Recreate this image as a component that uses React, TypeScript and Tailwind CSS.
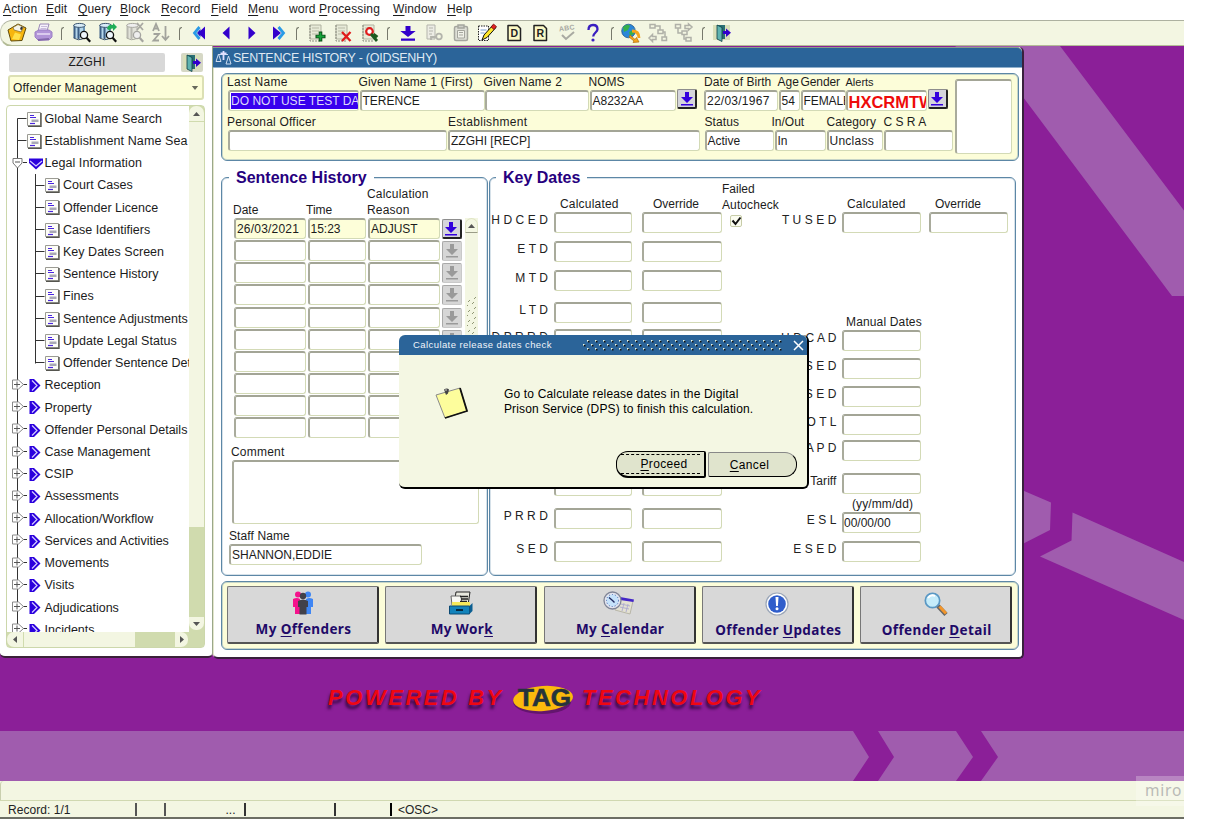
import React from "react";

type Kids = { children?: React.ReactNode };

/* ---------- shared pieces ---------- */

function Svg({ children, w = 22, h = 22 }: Kids & { w?: number; h?: number }) {
  return (
    <svg width={w} height={h} viewBox={`0 0 ${w} ${h}`} className="block shrink-0">
      {children}
    </svg>
  );
}

/* Renders "_" before a letter as an underlined mnemonic. */
function Mnemonic({ text }: { text: string }) {
  const i = text.indexOf("_");
  if (i < 0) return <>{text}</>;
  return (
    <>
      {text.slice(0, i)}
      <span className="underline underline-offset-2">{text[i + 1]}</span>
      {text.slice(i + 2)}
    </>
  );
}

function Field({ className, children }: Kids & { className: string }) {
  return (
    <div
      className={
        "shrink-0 overflow-hidden rounded-[3px] border-2 border-r border-b border-t-[#a3a596] border-l-[#a9ab9c] border-r-[#d3dab6] border-b-[#d3dab6] whitespace-nowrap flex items-center " +
        className
      }
    >
      {children}
    </div>
  );
}

function DownButton({ off, className = "" }: { off?: boolean; className?: string }) {
  return (
    <div
      className={
        "flex h-5 w-5 shrink-0 items-center justify-center rounded-[2px] border " +
        (off ? "border-[#a9a9a9] border-r-[#c9c9c9] border-b-[#c9c9c9] bg-[#d6d6d6] " : "border-[#8d8d8d] border-r-[#222] border-b-[#222] border-r-2 border-b-2 bg-[#d5d5dc] ") +
        className
      }
    >
      <svg width="14" height="16" viewBox="0 0 14 16">
        <path d="M5 1h4v5h4L7 12 1 6h4zM1 13h12v1.6H1z" fill={off ? "#9a9a9a" : "#3300dd"} />
      </svg>
    </div>
  );
}

/* ---------- toolbar icons ---------- */

const barrel = (dim: boolean) => (
  <g>
    <path d="M3 3h11v13H3z" fill={dim ? "#e2e3da" : "#b4d6ea"} />
    <path d="M3.500 3v13M7.500 4v13" stroke={dim ? "#b8b8b0" : "#3c5f86"} strokeWidth="2" />
    <path d="M13 4v8" stroke={dim ? "#c4c4bc" : "#5481a8"} strokeWidth="1.500" />
    <ellipse cx="8.500" cy="3.400" rx="5.800" ry="2" fill={dim ? "#eee" : "#d8ecf8"} stroke={dim ? "#a8a8a0" : "#39536e"} />
    <path d="M2.600 16q5 3 9 1" fill="none" stroke={dim ? "#a8a8a0" : "#39536e"} />
  </g>
);
const lens = (dim: boolean) => (
  <g>
    <circle cx="13" cy="13" r="3.600" fill={dim ? "#eee" : "#eef6fc"} stroke={dim ? "#a5a5a0" : "#111"} strokeWidth="1.300" />
    <path d="M15.600 15.800l3.600 4" stroke={dim ? "#a5a5a0" : "#111"} strokeWidth="2.200" />
  </g>
);
const sheet = (
  <g>
    <path d="M4 3h11v14H4z" fill="#e7ead8" stroke="#b0b2a0" />
    <path d="M4 3v16h10" stroke="#8b8d80" fill="none" strokeDasharray="2 1" />
    <path d="M6 6h7M6 9h7M6 12h6" stroke="#b9bba8" />
  </g>
);

const icons: Record<string, React.ReactNode> = {
  save: (
    <g>
      <path d="M2 8l10-6 8 4-4 12.500L5 19z" fill="#f6b50f" stroke="#5f4a0a" />
      <path d="M7 5.500l5-3 5.500 2.500-2.500 5-7-2z" fill="#f4f4ea" stroke="#8a7430" strokeWidth=".8" />
      <path d="M6 17l3-6.500 6 2-2 5.500z" fill="#ffe04a" />
      <path d="M15 4.500l2 1-1.200 2.500-1.800-.8z" fill="#333" />
    </g>
  ),
  print: (
    <g>
      <path d="M7 2h9l-2 7H5z" fill="#f6f2fb" stroke="#9c8ab8" />
      <path d="M8 4.500h6M7.500 6.500h6" stroke="#c9bcdc" />
      <path d="M2 10l4-2h10l3 2v5l-3 3H5l-3-3z" fill="#b295d8" stroke="#9c80c4" />
      <path d="M4 12h13" stroke="#e9def6" strokeWidth="1.500" />
      <path d="M5 18l11-1" stroke="#8468ac" strokeWidth="2" />
    </g>
  ),
  find: <g>{barrel(false)}{lens(false)}</g>,
  findGo: (
    <g>
      {barrel(false)}
      <path d="M10 7q1-5 6-4V1l4 4-4 4V6.500q-3-.5-3 2z" fill="#1fae57" />
      {lens(false)}
    </g>
  ),
  findCancel: (
    <g>
      {barrel(true)}
      <path d="M13 1l6 7M19 1l-6 7" stroke="#a8a8a2" strokeWidth="1.800" />
      {lens(true)}
    </g>
  ),
  sort: (
    <g fill="none" stroke="#a2a39c" strokeWidth="1.800">
      <path d="M3 9l3-7 3 7M4 6.500h4M3.500 12H9l-5.500 6.500H9" />
      <path d="M15.500 4v14M12 14l3.500 4 3.500-4" />
    </g>
  ),
  first: <g><path d="M17 4.500v13L10 11z" fill="#3300cc" /><path d="M11.500 5L6.500 11l5 6" fill="none" stroke="#2a9ae6" strokeWidth="2.800" /><path d="M12.500 7l-3.500 4 3.500 4z" fill="#2210c8" /></g>,
  prev: <path d="M14.500 4.500v13L7.500 11z" fill="#3300cc" />,
  next: <path d="M7.500 4.500v13l7-6.500z" fill="#3300cc" />,
  last: <g><path d="M10.500 5l5 6-5 6" fill="none" stroke="#2a9ae6" strokeWidth="2.800" /><path d="M5 4.500v13l8-6.500z" fill="#3300cc" /></g>,
  add: <g>{sheet}<path d="M14.500 9.500v10M9.500 14.500h10" stroke="#0b4a17" strokeWidth="3.600" /><path d="M14.500 10.500v8M10.500 14.500h8" stroke="#17a33b" strokeWidth="1.800" /></g>,
  del: <g>{sheet}<path d="M10 10l8.500 9M18.500 10L10 19" stroke="#e01a1a" strokeWidth="2.300" /></g>,
  lock: <g>{sheet}<circle cx="10.500" cy="9.500" r="3.300" fill="#fff" stroke="#e01a1a" strokeWidth="2.200" /><path d="M12 12l6 7M14.500 12l4 3" stroke="#1c5a20" strokeWidth="2.800" /></g>,
  lov: <path d="M8.500 4h5v5h5.200L11 15 3.300 9h5.200zM4 16.500h14v2.300H4z" fill="#3300cc" />,
  docKey: <g stroke="#b3b4ac" fill="none"><path d="M4 3h8v14H4zM6 6h4M6 9h4M6 12h3" fill="#ececE4" /><circle cx="16" cy="14.500" r="2.800" strokeWidth="1.800" /><path d="M13 15H8v3" strokeWidth="1.800" /></g>,
  clip: <g fill="none" stroke="#a5a69e" strokeWidth="1.500"><rect x="4.500" y="4.500" width="13" height="14" rx="1.500" fill="#dedfd6" /><path d="M8 3h6v3H8z" fill="#cfd0c8" /><path d="M7.500 8.500h7v7.500h-7zM9 10.500h4M9 13h4" fill="#f0f1e8" strokeWidth="1" /></g>,
  edit: <g><path d="M2.500 4h10v14.500h-10z" fill="#fff" stroke="#222" strokeDasharray="1.500 1" /><path d="M4.500 8h6M4.500 11h4" stroke="#7aa0d0" /><path d="M6 18l2-5 9-10 3 2.500-9 10z" fill="#ffe62a" stroke="#111" /><path d="M15 5l2.500-3 3 2.500-2.500 3z" fill="#e02222" stroke="#701010" strokeWidth=".7" /></g>,
  spell: <g><text x="3" y="8.500" fontSize="7" fontWeight="700" fill="#a9aaa2" fontFamily="Liberation Sans" transform="rotate(-8 10 8)" letterSpacing="0.3">ABC</text><path d="M6 13l4 4 8-7" fill="none" stroke="#a9aaa2" strokeWidth="2" /></g>,
  help: <g><path d="M6.500 8q0-5 4.500-5t4.500 4.300c0 3-4.300 3.500-4.300 7.200" fill="none" stroke="#3a1fc0" strokeWidth="2.300" /><circle cx="11" cy="18" r="1.600" fill="#3a1fc0" /></g>,
  globe: <g><circle cx="8.500" cy="9" r="6.800" fill="#2a86d8" stroke="#174a80" strokeWidth=".7" /><path d="M3 5q5-4 7-1l-2 4-4 2zM9 10l4-2 1 4-4 2z" fill="#35b04a" /><path d="M12 9q7 0 7 7" fill="none" stroke="#f4a51c" strokeWidth="2.800" /><path d="M10 13l5 4.500 1.500-2 2.500 4.500-6 .5 1-1.500-5-4z" fill="#f4a51c" stroke="#b06a06" strokeWidth=".7" /></g>,
  flowA: <g fill="none" stroke="#b0b1a8" strokeWidth="1.500"><rect x="3" y="2.500" width="5" height="3.500" /><rect x="11" y="8" width="5" height="3.500" /><rect x="15" y="15" width="4.500" height="3.500" /><path d="M8 4h5v4M16 10h2v5M9 14.500H5.500v-2L2 16l3.500 3.500v-2H9z" /></g>,
  flowB: <g fill="none" stroke="#b0b1a8" strokeWidth="1.500"><rect x="2.500" y="2.500" width="5" height="3.500" /><rect x="9" y="9" width="5" height="3.500" /><rect x="13" y="15.500" width="5" height="3.500" /><path d="M5 6v5h4M11 12.500V17h2M12 3.500h3.500V2L19 5l-3.500 3V6.500H12z" /></g>,
  door: <g><path d="M2 3h17v15H2z" fill="#d9dfb9" /><path d="M6 3h8v14H6z" fill="#2a6f74" /><path d="M6 3l5 2.500v14L6 17z" fill="#5fb3b0" stroke="#0b3c44" strokeWidth=".8" /><path d="M12 10.500h4" stroke="#3300cc" strokeWidth="3" /><path d="M15 6.500v8.500l5-4.300z" fill="#3300cc" /></g>,
};

const pageIcon = (l: string) => (
  <svg width="22" height="22" viewBox="0 0 22 22" className="block">
    <path d="M5 3.500h9.500l3 3V18.500H5z" fill="#fbf8c4" stroke="#222" strokeWidth="1.500" strokeLinejoin="round" />
    <text x="11.200" y="15" fontSize="10.500" fontWeight="700" textAnchor="middle" fontFamily="Liberation Sans" fill="#222">{l}</text>
  </svg>
);

const tools = ["save", "print", "|", "find", "findGo", "findCancel", "sort", "|", "first", "prev", "next", "last", "|", "add", "del", "lock", "|", "lov", "docKey", "clip", "edit", "D", "R", "spell", "help", "|", "globe", "flowA", "flowB", "|", "door"];

function Toolbar() {
  return (
    <div className="flex h-[27px] items-center rounded-l-xl border-t border-b-2 border-l border-t-[#adb1a0] border-b-[#b3bb96] border-l-[#c8ccb8] bg-[#f3f6e2] pl-[3px]">
      {tools.map((t, i) =>
        t === "|" ? (
          <div key={i} className="flex w-[11.700px] shrink-0 justify-center">
            <div className="mt-[1px] h-[13px] w-[3px] rounded-tl border-t border-l border-[#77796c]" />
          </div>
        ) : (
          <div key={i} className="flex w-[26.460px] shrink-0 items-center justify-center">
            {t === "D" || t === "R" ? pageIcon(t) : <Svg>{icons[t]}</Svg>}
          </div>
        ),
      )}
    </div>
  );
}

function MenuBar() {
  const items: [string, string][] = [
    ["_Action", "w-[43px]"],
    ["_Edit", "w-[32px]"],
    ["_Query", "w-[42px]"],
    ["_Block", "w-[41px]"],
    ["_Record", "w-[50px]"],
    ["_Field", "w-[37px]"],
    ["_Menu", "w-[41px]"],
    ["word _Processing", "w-[104px]"],
    ["_Window", "w-[54px]"],
    ["_Help", "w-[40px]"],
  ];
  return (
    <div className="flex h-5 pl-[3px] text-[12px] leading-[18px] tracking-[0.15px] whitespace-nowrap">
      {items.map(([t, w]) => (
        <div key={t} className={"shrink-0 " + w}>
          <Mnemonic text={t} />
        </div>
      ))}
    </div>
  );
}

/* ---------- navigation window ---------- */

function DocIcon() {
  return (
    <Svg w={15} h={15}>
      <path d="M.5.5h13v13H.5z" fill="#fdfdf8" stroke="#9b9b94" />
      <path d="M14 1v13.500H1" fill="none" stroke="#55554f" strokeWidth="1.400" />
      <path d="M3 3.500h4M3 5.500h6" stroke="#4a26e0" strokeWidth="1.200" />
      <path d="M4.500 7.500h7v2.500h-7z" fill="#a9a9b6" />
      <path d="M3 11.500h5" stroke="#4a26e0" strokeWidth="1.200" />
    </Svg>
  );
}

function NavWindow() {
  const children = ["Court Cases", "Offender Licence", "Case Identifiers", "Key Dates Screen", "Sentence History", "Fines", "Sentence Adjustments", "Update Legal Status", "Offender Sentence Det"];
  const folders = ["Reception", "Property", "Offender Personal Details", "Case Management", "CSIP", "Assessments", "Allocation/Workflow", "Services and Activities", "Movements", "Visits", "Adjudications", "Incidents"];
  return (
    <div className="absolute top-0 left-0 flex h-[612px] w-[213px] flex-col rounded-b-[5px] border-r border-b-2 border-r-[#9aa88a] border-b-[#3a2038] bg-white pt-[7px] text-[12.500px]">
      <div className="flex pl-[9px]">
        <div className="h-[19px] w-[156px] rounded-[2px] bg-[#d8d8d8] text-center text-[12px] leading-[19px] tracking-[0.200px]">ZZGHI</div>
        <div className="ml-[16px] flex h-[19px] w-[22px] items-center justify-center rounded-[2px] bg-[#d6d8c6]">
          <Svg>{icons.door}</Svg>
        </div>
      </div>
      <div className="mt-[3px] ml-[8px] flex h-[25px] w-[196px] items-center justify-between rounded-[3px] border-2 border-[#dce0b4] bg-[#fdfed9] pr-[3px] pl-[3px]">
        <span className="text-[12px] tracking-[0.200px]">Offender Management</span>
        <svg width="8" height="4" viewBox="0 0 9 5"><path d="M.5 0h8l-4 5z" fill="#686a5c" /></svg>
      </div>
      <div className="mt-[5px] ml-[6px] flex h-[543px] w-[199px] flex-col rounded-[4px] border border-[#ccd7ab]">
        <div className="flex h-[526px]">
          <div className="relative h-full w-[182px] overflow-hidden pt-[2px]">
            <svg className="absolute top-0 left-0" width="60" height="526" viewBox="0 0 60 526">
              <path d="M10.500 12.500V526M10.500 12.500h9M10.500 34.500h9M16 56.500h4M28.500 68v189.500" fill="none" stroke="#333" />
              {children.map((c, i) => (
                <path key={c} d={`M28.500 ${Math.round(79.5 + i * 22.2) - 0.5}h9`} stroke="#333" />
              ))}
              <path d="M6 52.500h9v4.500l-4.500 5-4.500-5z" fill="#fff" stroke="#777" />
              <path d="M8 56h5" stroke="#555" />
              {folders.map((c, i) => {
                const y = Math.round(279 + i * 22.2) - 0.5;
                return (
                  <g key={c}>
                    <path d={`M16 ${y}h4`} stroke="#333" />
                    <path d={`M5.500 ${y - 4.5}h6l5 4.500-5 4.500h-6z`} fill="#fff" stroke="#888" />
                    <path d={`M7 ${y}h6M10 ${y - 3}v6`} stroke="#555" />
                  </g>
                );
              })}
            </svg>
            {["Global Name Search", "Establishment Name Sea"].map((t) => (
              <div key={t} className="flex h-[22.220px] items-center pl-[20px]">
                <DocIcon />
                <span className="pl-[2.500px] tracking-[0.090px] whitespace-nowrap">{t}</span>
              </div>
            ))}
            <div className="flex h-[22.220px] items-center pl-[22px]">
              <Svg w={14} h={12}>
                <path d="M0 .5h14v4.500L7 11.500 0 5z" fill="#2a00dd" />
                <path d="M1 3l6 5 6-5" fill="none" stroke="#cfc6ff" strokeWidth="1.300" />
              </Svg>
              <span className="pl-[1.500px] tracking-[0.050px]">Legal Information</span>
            </div>
            {children.map((t) => (
              <div key={t} className="flex h-[22.220px] items-center pl-[38px]">
                <DocIcon />
                <span className="pl-[3px] tracking-[0.020px] whitespace-nowrap">{t}</span>
              </div>
            ))}
            {folders.map((t) => (
              <div key={t} className="flex h-[22.220px] items-center pl-[22px]">
                <Svg w={12} h={13}>
                  <path d="M.5 0h4.500l6.500 6.500L5 13H.5z" fill="#2a00dd" />
                  <path d="M3 1.500l5 5-5 5" fill="none" stroke="#d6ceff" strokeWidth="1.200" />
                </Svg>
                <span className="pl-[3.500px] whitespace-nowrap">{t}</span>
              </div>
            ))}
          </div>
          <div className="flex w-[15px] flex-col bg-[#d0dbae]">
            <div className="flex h-4 items-center justify-center rounded-t-[7px] border-b border-[#d0dbae] bg-[#f3f6e2]">
              <svg width="7" height="4" viewBox="0 0 7 4"><path d="M0 4h7L3.500 0z" fill="#555" /></svg>
            </div>
            <div className="h-[405px] bg-[#f3f6e2]" />
            <div className="mt-[90px] flex h-[13px] items-center justify-center rounded-b-[7px] bg-[#f3f6e2]">
              <svg width="7" height="4" viewBox="0 0 7 4"><path d="M0 0h7L3.500 4z" fill="#555" /></svg>
            </div>
          </div>
        </div>
        <div className="flex h-[15px] bg-[#d0dbae]">
          <div className="flex w-4 items-center justify-center rounded-l-[7px] bg-[#f3f6e2]">
            <svg width="4" height="7" viewBox="0 0 4 7"><path d="M4 0v7L0 3.500z" fill="#555" /></svg>
          </div>
          <div className="ml-px w-[111px] bg-[#f3f6e2]" />
          <div className="ml-[40px] flex w-[13px] items-center justify-center rounded-r-[7px] bg-[#f3f6e2]">
            <svg width="4" height="7" viewBox="0 0 4 7"><path d="M0 0v7l4-3.500z" fill="#555" /></svg>
          </div>
        </div>
      </div>
    </div>
  );
}

/* ---------- offender header ---------- */

function Cell({ label, cell, field, value, labelClass = "" }: { label: string; cell: string; field: string; value?: React.ReactNode; labelClass?: string }) {
  return (
    <div className={"shrink-0 " + cell}>
      <div className={"h-[15px] leading-[15px] whitespace-nowrap " + labelClass}>{label}</div>
      <Field className={"h-[21px] bg-white pl-[1px] " + field}>{value}</Field>
    </div>
  );
}

function OffenderHeader() {
  return (
    <div className="mt-[6px] ml-[7px] flex h-[88px] w-[798px] justify-between rounded-[6px] border border-[#5c87a6] bg-[#fcfdd9] pt-px pr-[6px] pl-[6px] shadow-[inset_0_0_0_1px_#5c87a655]">
      <div>
        <div className="flex">
          <Cell label="Last Name" cell="w-[131.500px]" field="w-[131px]" labelClass="-ml-px tracking-[0.300px]" value={<div className="h-[16px] w-full bg-[#3800ee] leading-[17px] tracking-[0.020px] text-[#ddd8fa]">DO NOT USE TEST DA</div>} />
          <Cell label="Given Name 1 (First)" cell="w-[125px]" field="w-[125px]" labelClass="-ml-px tracking-[0.150px]" value="TERENCE" />
          <Cell label="Given Name 2" cell="w-[105px]" field="w-[104.500px]" labelClass="-ml-px tracking-[0.150px]" value="" />
          <Cell label="NOMS" cell="w-[87.500px]" field="w-[86px]" labelClass="-ml-px" value="A8232AA" />
          <DownButton className="mt-[14px] mr-[7px]" />
          <Cell label="Date of Birth" cell="w-[74.500px]" field="w-[73.500px]" labelClass="tracking-[0.050px]" value={<span className="tracking-[0.250px]">22/03/1967</span>} />
          <Cell label="Age" cell="w-[22px]" field="w-[21.500px]" labelClass="-ml-px" value="54" />
          <Cell label="Gender" cell="w-[45px]" field="w-[45px]" labelClass="tracking-[-0.100px]" value={<span className="tracking-[-0.100px]">FEMALE</span>} />
          <Cell label="Alerts" cell="w-[82px]" field="w-[81px]" labelClass="text-[11px]" value={<span className="pt-[2px] text-[16.500px] leading-none font-bold text-[#ee0a0a]">HXCRMTW</span>} />
          <DownButton className="mt-[14px]" />
        </div>
        <div className="mt-[4px] flex">
          <Cell label="Personal Officer" cell="w-[220px]" field="w-[218.500px]" labelClass="-ml-px tracking-[0.200px]" />
          <Cell label="Establishment" cell="w-[256.500px]" field="w-[251.500px]" labelClass="tracking-[0.300px]" value="ZZGHI [RECP]" />
          <Cell label="Status" cell="w-[70px]" field="w-[69px]" labelClass="tracking-[0.100px]" value="Active" />
          <Cell label="In/Out" cell="w-[52px]" field="w-[51px]" labelClass="-ml-[3px]" value="In" />
          <Cell label="Category" cell="w-[57px]" field="w-[56px]" labelClass="tracking-[0.100px]" value={<span className="tracking-[0.250px]">Unclass</span>} />
          <Cell label="C S R A" cell="w-[70px]" field="w-[69px]" />
        </div>
      </div>
      <Field className="mt-[4px] h-[75px] w-[57px] bg-white" />
    </div>
  );
}

/* ---------- sentence history ---------- */

function PanelTitle({ children }: Kids) {
  return <div className="-mt-[10px] w-fit bg-white pr-[7px] pl-[7px] text-[16px] leading-[20px] font-bold text-[#26007e]">{children}</div>;
}

function SentenceHistory() {
  const rows = [["26/03/2021", "15:23", "ADJUST"], [], [], [], [], [], [], [], [], []];
  return (
    <div className="h-[399px] w-[267px] rounded-[6px] border border-[#5c87a6] pl-[7px] shadow-[inset_0_0_0_1px_#5c87a640]">
      <PanelTitle>Sentence History</PanelTitle>
      <div className="-mt-[2px] flex items-end pl-[4px] leading-[16px]">
        <div className="w-[73px]">Date</div>
        <div className="w-[61px]">Time</div>
        <div className="tracking-[0.200px]">Calculation<br />Reason</div>
      </div>
      <div className="flex pl-[5px]">
        <div>
          {rows.map((r, i) => {
            const bg = i === 0 ? " bg-[#fdfed9]" : " bg-white";
            return (
              <div key={i} className="flex h-[22.150px] gap-[2px]">
                <Field className={"h-[21px] w-[71.500px] pl-[1px] tracking-[0.200px]" + bg}>{r[0]}</Field>
                <Field className={"h-[21px] w-[58.500px] pl-[1px]" + bg}>{r[1]}</Field>
                <Field className={"h-[21px] w-[71.500px] pl-[1px]" + bg}>{r[2]}</Field>
                <DownButton off={i > 0} className="mt-px" />
              </div>
            );
          })}
        </div>
        <div className="ml-[3px] h-[220px] w-[13px] bg-[#f3f6e2]">
          <div className="flex h-[15px] items-center justify-center rounded-t-[7px] border border-[#dfe4c4] border-b-[#9a9c88]">
            <svg width="7" height="4" viewBox="0 0 7 4"><path d="M0 4h7L3.500 0z" fill="#555" /></svg>
          </div>
          <svg width="13" height="60" viewBox="0 0 13 60" className="mt-[62px]">
            {[4, 14, 24, 34, 44, 54].map((y) => (
              <path key={y} d={`M3 ${y + 3}l2-2M9 ${y}l2-2M2 ${y + 7}l1-1M7 ${y + 5}l2-2`} stroke="#8f9674" />
            ))}
          </svg>
        </div>
      </div>
      <div className="mt-[5px] ml-[2px] leading-[16px] tracking-[0.200px]">Comment</div>
      <Field className="ml-[3px] h-[64px] w-[247px] bg-white" />
      <div className="mt-[4px] leading-[16px] tracking-[0.100px]">Staff Name</div>
      <Field className="h-[21px] w-[193px] bg-white pl-[1px]">SHANNON,EDDIE</Field>
    </div>
  );
}

/* ---------- key dates ---------- */

const leftDates: [string, string][] = [
  ["H D C E D", "mt-0"],
  ["E T D", "mt-[8px]"],
  ["M T D", "mt-[8px]"],
  ["L T D", "mt-[10.500px]"],
  ["D P R R D", "mt-[6.500px]"],
  ["N P D", "mt-[125px]"],
  ["P R R D", "mt-[11.500px]"],
  ["S E D", "mt-[12.500px]"],
];
const rightDates: [string, string][] = [
  ["H D C A D", "mt-0"],
  ["E R S E D", "mt-[6.500px]"],
  ["T R S E D", "mt-[7px]"],
  ["R O T L", "mt-[7.500px]"],
  ["A P D", "mt-[5px]"],
  ["Tariff", "mt-[11.500px]"],
];

function KeyRow({ label, value }: { label: string; value?: string }) {
  return (
    <>
      <div className="flex min-w-0 flex-1 justify-end pt-px pr-[5.500px] leading-[15px] whitespace-pre tracking-[0.080px] text-[#222]">
        <span className="shrink-0">{label}</span>
      </div>
      <Field className="h-[21px] w-[78.500px] bg-white">{value}</Field>
    </>
  );
}

function KeyDates() {
  return (
    <div className="h-[399px] w-[527px] rounded-[6px] border border-[#5c87a6] pl-[6px] shadow-[inset_0_0_0_1px_#5c87a640]">
      <PanelTitle>Key Dates</PanelTitle>
      <div className="flex">
        <div className="w-[226px]">
          <div className="flex h-[24px] items-end pl-[64px] leading-[15px]">
            <div className="w-[93px] tracking-[0.200px]">Calculated</div>
            <div>Override</div>
          </div>
          {leftDates.map(([label, mt]) => (
            <div key={label} className={"flex w-full gap-0 " + mt}>
              <div className="flex w-[136px]">
                <KeyRow label={label} />
              </div>
              <Field className="ml-[10px] h-[21px] w-[79.500px] bg-white" />
            </div>
          ))}
        </div>
        <div className="w-[60px]">
          <div className="-mt-[7px] leading-[16px]">Failed<br /><span className="tracking-[0.100px]">Autocheck</span></div>
          <div className="mt-[2px] ml-[8px] h-[12px] w-[12px] rounded-[2px] border border-[#c7cca8] bg-[#fbfcf0]">
            <svg width="11" height="10" viewBox="0 0 11 10"><path d="M1.500 4.500L4.500 8 9.500 1.500" fill="none" stroke="#111" strokeWidth="2" /></svg>
          </div>
        </div>
        <div>
          <div className="flex h-[24px] items-end pl-[65px] leading-[15px]">
            <div className="w-[88px] tracking-[0.200px]">Calculated</div>
            <div>Override</div>
          </div>
          <div className="flex">
            <div className="flex w-[138.500px]"><KeyRow label="T U S E D" /></div>
            <Field className="ml-[8px] h-[21px] w-[79px] bg-white" />
          </div>
          <div className="mt-[82px] pl-[64px] leading-[15px] tracking-[0.150px]">Manual Dates</div>
          {rightDates.map(([label, mt]) => (
            <div key={label} className={"flex w-[138.500px] " + mt}><KeyRow label={label} /></div>
          ))}
          <div className="mt-[2px] pl-[70px] leading-[16px] tracking-[0.100px]">(yy/mm/dd)</div>
          <div className="flex w-[138.500px]"><KeyRow label="E S L" value="00/00/00" /></div>
          <div className="mt-[8.500px] flex w-[138.500px]"><KeyRow label="E S E D" /></div>
        </div>
      </div>
    </div>
  );
}

/* ---------- bottom shortcuts ---------- */

const shortcutIcons: React.ReactNode[] = [
  <g key="p">
    <g fill="#f5128c"><circle cx="8" cy="3.500" r="3" /><path d="M3 8q4-2 7 0v15H5v-7H3z" /></g>
    <g fill="#3f86f4"><circle cx="18" cy="3.500" r="3" /><path d="M23 8q-4-2-7 0v15h5v-7h2z" /></g>
    <g fill="#41414a"><circle cx="13" cy="5" r="3.200" /><path d="M8 10q5-3 10 0v6h-1.500v7.500h-7V16H8z" /></g>
  </g>,
  <g key="w">
    <path d="M8 1h14l-2 13H6z" fill="#e8e8de" stroke="#222" />
    <path d="M3 5h10l1 9H4z" fill="#f8f8f4" stroke="#666" />
    <path d="M12 5.500h8M13 8h7M12 10.500h7" stroke="#222" strokeWidth="1.300" />
    <path d="M4 11h18v6H4z" fill="#f6e95a" />
    <path d="M1.500 15h20v8h-20z" fill="#1283bb" stroke="#0b4a74" />
    <path d="M21.500 15l3-3v8l-3 3z" fill="#0b5f92" />
    <path d="M8 18h7v2H8z" fill="#05283e" />
  </g>,
  <g key="c">
    <path d="M15 7l15 3-3 13-15-4z" fill="#e3e1d2" stroke="#b8b6a8" />
    <path d="M17 6l14 2.500-.6 2.500-13.400-2z" fill="#4326c8" />
    <path d="M18 13l9 2M17 16l9 2M21 12l-2 8M25 13l-2 8" stroke="#b0aed0" />
    <circle cx="9.500" cy="9.500" r="8.500" fill="#e2e4ee" stroke="#7f8496" strokeWidth="1.300" />
    <circle cx="9.500" cy="9.500" r="6" fill="#c5e2fb" stroke="#3d62ae" strokeDasharray="1 2" />
    <path d="M9.500 9.500L6 6.500M9.500 9.500l2 2" stroke="#222a60" strokeWidth="1.400" />
  </g>,
  <g key="u">
    <circle cx="13" cy="12" r="11" fill="#fff" stroke="#9ba6b8" strokeWidth="1.200" />
    <circle cx="13" cy="12" r="8.800" fill="#2f5dcb" />
    <path d="M11.500 5h3l-.6 9h-1.800z" fill="#fff" />
    <circle cx="13" cy="16.800" r="1.500" fill="#fff" />
  </g>,
  <g key="d">
    <circle cx="9.500" cy="8.500" r="7.200" fill="#c5ecfa" stroke="#5a98c4" strokeWidth="1.700" />
    <path d="M5 6q3-4 7-2" stroke="#fff" strokeWidth="2" fill="none" />
    <path d="M15 14l8 8.500" stroke="#666" strokeWidth="4.500" />
    <path d="M16.500 14.500l6.500 7" stroke="#f2962c" strokeWidth="3" />
  </g>,
];

function Shortcuts() {
  const items: [string, string][] = [
    ["My _Offenders", "pt-[4px]"],
    ["My Wor_k", "pt-[4px]"],
    ["My _Calendar", "pt-[4px]"],
    ["Offender _Updates", "pt-[5px]"],
    ["Offender _Detail", "pt-[5px]"],
  ];
  return (
    <div className="mt-[5px] ml-[7px] flex h-[69px] w-[798px] gap-[6.300px] rounded-[6px] border border-[#5c87a6] bg-[#fcfdd9] pt-[4px] pl-[5px] shadow-[inset_0_0_0_1px_#5c87a655]">
      {items.map(([label, pt], i) => (
        <div key={label} className={"flex h-[58px] w-[152px] shrink-0 flex-col items-center rounded-[2px] border border-r-2 border-b-2 border-[#777] border-r-[#333] border-b-[#555] bg-[#d8d8d8] " + pt}>
          <Svg w={i === 2 ? 32 : 26} h={25}>{shortcutIcons[i]}</Svg>
          <div className="mt-[4px] pl-[2px] font-['Noto_Sans'] text-[13.500px] leading-[18px] font-bold tracking-[0.380px] text-[#1f0a68]">
            <Mnemonic text={label} />
          </div>
        </div>
      ))}
    </div>
  );
}

function MainWindow() {
  return (
    <div className="absolute top-[1px] left-[213px] h-[612px] w-[810.500px] rounded-[5px] border-r-2 border-b-2 border-l border-l-[#e3e6cc] border-r-[#38203c] border-b-[#38203c] bg-white text-[12px]">
      <div className="-ml-px flex h-[21px] items-center rounded-tr-[5px] border-t border-b border-t-[#8a9a8c] border-b-[#8fb0cc] bg-[#2b6499] pl-[2px] text-[#dfe9f3]">
        <svg width="17" height="16" viewBox="0 0 17 16" fill="none" stroke="#cddcf0">
          <path d="M4 4.500h9M3.500 4l-2.500 7.500h5zM13.500 6L11 14h5z" />
          <path d="M5.500 3.500h6M8.500 1v9" stroke="#e2e0ff" strokeWidth="1.800" />
        </svg>
        <span className="pt-[2px] pl-[1px] text-[12.500px] leading-[15px] tracking-[-0.250px]">SENTENCE HISTORY - (OIDSENHY)</span>
      </div>
      <div className="-mt-px">
        <OffenderHeader />
      </div>
      <div className="mt-[16px] ml-[7px] flex gap-[1px]">
        <SentenceHistory />
        <KeyDates />
      </div>
      <Shortcuts />
    </div>
  );
}

/* ---------- dialog ---------- */

function Dialog() {
  return (
    <div className="absolute top-[289px] left-[399px] h-[154px] w-[410px] rounded-[6px] border-r-2 border-b-2 border-black bg-[#f4f7e3] text-[12px] text-black">
      <div className="flex h-[20px] items-center rounded-t-[6px] bg-[#2b6499] pl-[14px] text-[#f0f4fa]">
        <span className="w-[169px] text-[9.500px] tracking-[0.420px]">Calculate release dates check</span>
        <svg width="201" height="12" viewBox="0 0 201 12">
          <defs>
            <pattern id="grip" width="8" height="8" patternUnits="userSpaceOnUse">
              <path d="M1 5h1.500v1.500H1zM5 1h1.500v1.500H5z" fill="#f2f6da" />
              <path d="M2 6h1.500v1.500H2zM6 2h1.500v1.500H6z" fill="#111" />
            </pattern>
          </defs>
          <rect width="200" height="12" fill="url(#grip)" />
        </svg>
        <svg width="11" height="11" viewBox="0 0 11 11" className="ml-[10px]"><path d="M1 1l9 9M10 1l-9 9" stroke="#fff" strokeWidth="1.500" /></svg>
      </div>
      <div className="flex pt-[31px] pl-[35px]">
        <svg width="36" height="34" viewBox="0 0 36 34">
          <path d="M2 9l24-7 7 23-22 7z" fill="#fdfd9c" stroke="#8a8a8a" />
          <path d="M26 2l7 23-22 7" fill="none" stroke="#111" strokeWidth="1.800" />
          <path d="M10 3.500q3-2 5 0l-1 4-2 1.500z" fill="#444" />
          <path d="M11 4h2" stroke="#ccc" />
        </svg>
        <div className="ml-[34px] pt-px leading-[15px]">
          <div className="tracking-[0.160px]">Go to Calculate release dates in the Digital</div>
          <div className="tracking-[0.120px]">Prison Service (DPS) to finish this calculation.</div>
        </div>
      </div>
      <div className="mt-[31px] ml-[217px] flex items-center gap-[1.500px] tracking-[0.350px]">
        <div className="flex h-[27px] w-[90px] flex-col justify-center rounded-l-[12px] rounded-r-[2px] border border-r-2 border-b-2 border-black bg-[#e0e4cd] px-[4px]">
          <div className="border-y border-dashed border-black pt-px pl-[7px] text-center leading-[17px]"><Mnemonic text="_Proceed" /></div>
        </div>
        <div className="h-[25px] w-[89px] rounded-l-[2px] rounded-r-[12px] border border-[#888] border-r-black border-b-black bg-[#e0e4cd] pr-[5px] text-center leading-[24px]"><Mnemonic text="_Cancel" /></div>
      </div>
    </div>
  );
}

/* ---------- desktop ---------- */

function Wallpaper() {
  return (
    <svg className="absolute top-0 left-0" width="1184" height="735" viewBox="0 46 1184 735">
      <path d="M0 46h1184v735H0z" fill="#8b1f98" />
      <g fill="#a05cae">
        <path d="M955 46h105l124 164.500V296h-12L1023 97z" />
        <path d="M1023 490.500l28 12-1 27.500-27 13.700zM1072.500 512.500L1184 562v58l-144-63.500 31.500-16z" />
        <path d="M0 731h853l16 26-16 24H0zM878 731h78l17 26-17 24h-78l16-24zM981 731h203v50H981l17-24z" />
      </g>
    </svg>
  );
}

function Banner() {
  return (
    <div className="absolute top-[635px] left-[328px] flex items-center text-[22px] leading-[30px] font-bold text-[#ee0712] italic [text-shadow:-1px_4px_3px_#3c0a48]">
      <span className="w-[183px] tracking-[2.550px] whitespace-nowrap">POWERED BY</span>
      <svg width="64" height="34" viewBox="0 0 64 34" className="shrink-0 not-italic [text-shadow:none]">
        <ellipse cx="31" cy="21" rx="29" ry="12" fill="#4a0f52" opacity=".6" />
        <ellipse cx="32" cy="17.500" rx="30" ry="12.500" fill="#fbba0c" transform="rotate(-4 32 17)" />
        <text x="7" y="25" fontSize="23" fill="#25333b" stroke="#25333b" strokeWidth=".6" textLength="53" lengthAdjust="spacingAndGlyphs" fontFamily="Liberation Sans">TAG</text>
      </svg>
      <span className="pl-[7px] tracking-[2.500px]">TECHNOLOGY</span>
    </div>
  );
}

function StatusBar() {
  return (
    <div className="flex h-[38px] flex-col border-b-2 border-[#6c6e64] bg-[#f3f6e2] text-[12px] text-[#222]">
      <div className="h-[19px] rounded-tl-[4px] border-l border-[#c9cfae]" />
      <div className="flex h-[17px] items-center border-t border-[#d0d8b0] pl-[8px]">
        <div className="h-[17px] w-[127px] leading-[19px] tracking-[0.050px]">Record: 1/1</div>
        <div className="h-[13px] w-[28.500px] border-l-2 border-[#555]" />
        <div className="h-[13px] w-[62px] border-l-2 border-[#555]" />
        <div className="h-[17px] w-[18.500px] leading-[19px]">...</div>
        <div className="h-[13px] w-[90px] border-l-2 border-[#333]" />
        <div className="h-[13px] w-[55.500px] border-l-2 border-[#333]" />
        <div className="h-[13px] w-[8.500px] border-l-2 border-black" />
        <div className="h-[17px] leading-[19px]">&lt;OSC&gt;</div>
      </div>
    </div>
  );
}

export default function App() {
  return (
    <div className="h-[825px] w-[1211px] overflow-hidden bg-white font-['Liberation_Sans',Arial,sans-serif] text-[#1c1c1c]">
      <div className="relative flex w-[1184px] flex-col overflow-hidden">
        <MenuBar />
        <div className="h-[26px]">
          <Toolbar />
        </div>
        <div className="relative h-[735px]">
          <Wallpaper />
          <Banner />
          <NavWindow />
          <MainWindow />
          <Dialog />
        </div>
        <StatusBar />
        <div className="absolute top-[776px] left-[1136px] h-[30px] w-[48px] overflow-hidden bg-white/25 pl-[9px] font-['Noto_Sans'] text-[15.500px] leading-[29px] tracking-[0.800px] text-[#b9bab6]">miro</div>
      </div>
    </div>
  );
}
